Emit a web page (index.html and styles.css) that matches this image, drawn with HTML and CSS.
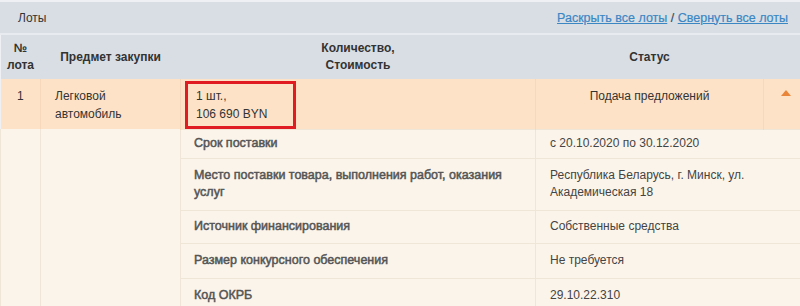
FILE: index.html
```html
<!DOCTYPE html>
<html lang="ru">
<head>
<meta charset="utf-8">
<link rel="stylesheet" href="styles.css">
</head>
<body>
<div class="panel">
  <div class="panel-head">
    <span class="title">Лоты</span>
    <span class="links"><a href="#">Раскрыть все лоты</a> / <a href="#">Свернуть все лоты</a></span>
  </div>
  <table class="lots">
    <colgroup>
      <col class="c-num"><col class="c-subj"><col class="c-qty"><col class="c-status"><col class="c-tog">
    </colgroup>
    <thead>
      <tr class="head-row">
        <th>№<br>лота</th>
        <th>Предмет закупки</th>
        <th>Количество,<br>Стоимость</th>
        <th>Статус</th>
        <th></th>
      </tr>
    </thead>
    <tbody>
      <tr class="lot-row">
        <td class="num">1</td>
        <td class="subj">Легковой<br>автомобиль</td>
        <td class="qty"><span class="mark"></span>1 шт.,<br>106 690 BYN</td>
        <td class="status">Подача предложений</td>
        <td class="tog"><span class="arrow"></span></td>
      </tr>
      <tr class="det r1">
        <td class="blank" rowspan="5"></td>
        <td class="blank" rowspan="5"></td>
        <td class="label">Срок поставки</td>
        <td class="value" colspan="2">с 20.10.2020 по 30.12.2020</td>
      </tr>
      <tr class="det r2">
        <td class="label">Место поставки товара, выполнения работ, оказания услуг</td>
        <td class="value" colspan="2">Республика Беларусь, г. Минск, ул. Академическая 18</td>
      </tr>
      <tr class="det r3">
        <td class="label">Источник финансирования</td>
        <td class="value" colspan="2">Собственные средства</td>
      </tr>
      <tr class="det r4">
        <td class="label">Размер конкурсного обеспечения</td>
        <td class="value" colspan="2">Не требуется</td>
      </tr>
      <tr class="det r5">
        <td class="label">Код ОКРБ</td>
        <td class="value" colspan="2">29.10.22.310</td>
      </tr>
    </tbody>
  </table>
</div>
</body>
</html>
```
FILE: styles.css
```css
* { box-sizing: border-box; }
html, body { margin: 0; padding: 0; }
body {
  background: #eef0f3;
  padding-top: 2px;
  font-family: "Liberation Sans", Arial, sans-serif;
  font-size: 12px;
  color: #333;
  overflow: hidden;
}
.panel { width: 800px; }
.panel-head {
  height: 31px;
  background: #d9dee4;
  display: flex;
  align-items: center;
  justify-content: space-between;
  padding: 0 12px 0 18px;
  border-bottom: 2px solid #e8ebef;
  box-sizing: content-box;
}
.title { color: #333; font-size: 12px; }
.links { color: #333; font-size: 12.5px; -webkit-text-stroke: 0.2px #3a87c4; }
.links a { color: #3a87c4; text-decoration: underline; }
.lots {
  width: 800px;
  border-collapse: collapse;
  table-layout: fixed;
}
.c-num { width: 40px; }
.c-subj { width: 140px; }
.c-qty { width: 355px; }
.c-status { width: 228px; }
.c-tog { width: 37px; }
.head-row { height: 44px; background: #d9dee4; }
.head-row th {
  font-weight: bold;
  color: #333;
  line-height: 17px;
  text-align: center;
  vertical-align: middle;
  padding: 0;
}
.lot-row { height: 50px; background: #fde2c7; }
.lot-row td {
  vertical-align: top;
  line-height: 18px;
  padding: 8px 0 0;
  color: #333;
  border-left: 1px solid #f6d8bb;
}
.lot-row td:first-child { border-left: none; }
.lot-row .num { text-align: center; }
.lot-row .subj { padding-left: 14px; }
.lot-row .qty { padding-left: 15px; position: relative; }
.lot-row .status { text-align: center; }
.mark {
  position: absolute;
  left: 4px;
  top: 2px;
  width: 111px;
  height: 48px;
  border: 3px solid #e01b22;
}
.tog { position: relative; }
.arrow {
  position: absolute;
  left: 17px;
  top: 11px;
  width: 0;
  height: 0;
  border-left: 5px solid transparent;
  border-right: 5px solid transparent;
  border-bottom: 6px solid #e8853a;
}
.det { background: #fbf4ea; }
.det td {
  border: 1px solid #f0e6d8;
  vertical-align: middle;
  line-height: 17px;
}
.det td.blank { border-top: none; }
.det td.label {
  padding-left: 13px;
  padding-right: 30px;
  color: #555;
  font-size: 12.5px;
  -webkit-text-stroke: 0.5px #555;
}
.det td.value {
  padding-left: 14px;
  padding-right: 30px;
  color: #444;
  border-right: none;
}
.r1 { height: 29px; }
.r2 { height: 52px; }
.r3 { height: 33px; }
.r4 { height: 35px; }
.r5 { height: 34px; }
```
